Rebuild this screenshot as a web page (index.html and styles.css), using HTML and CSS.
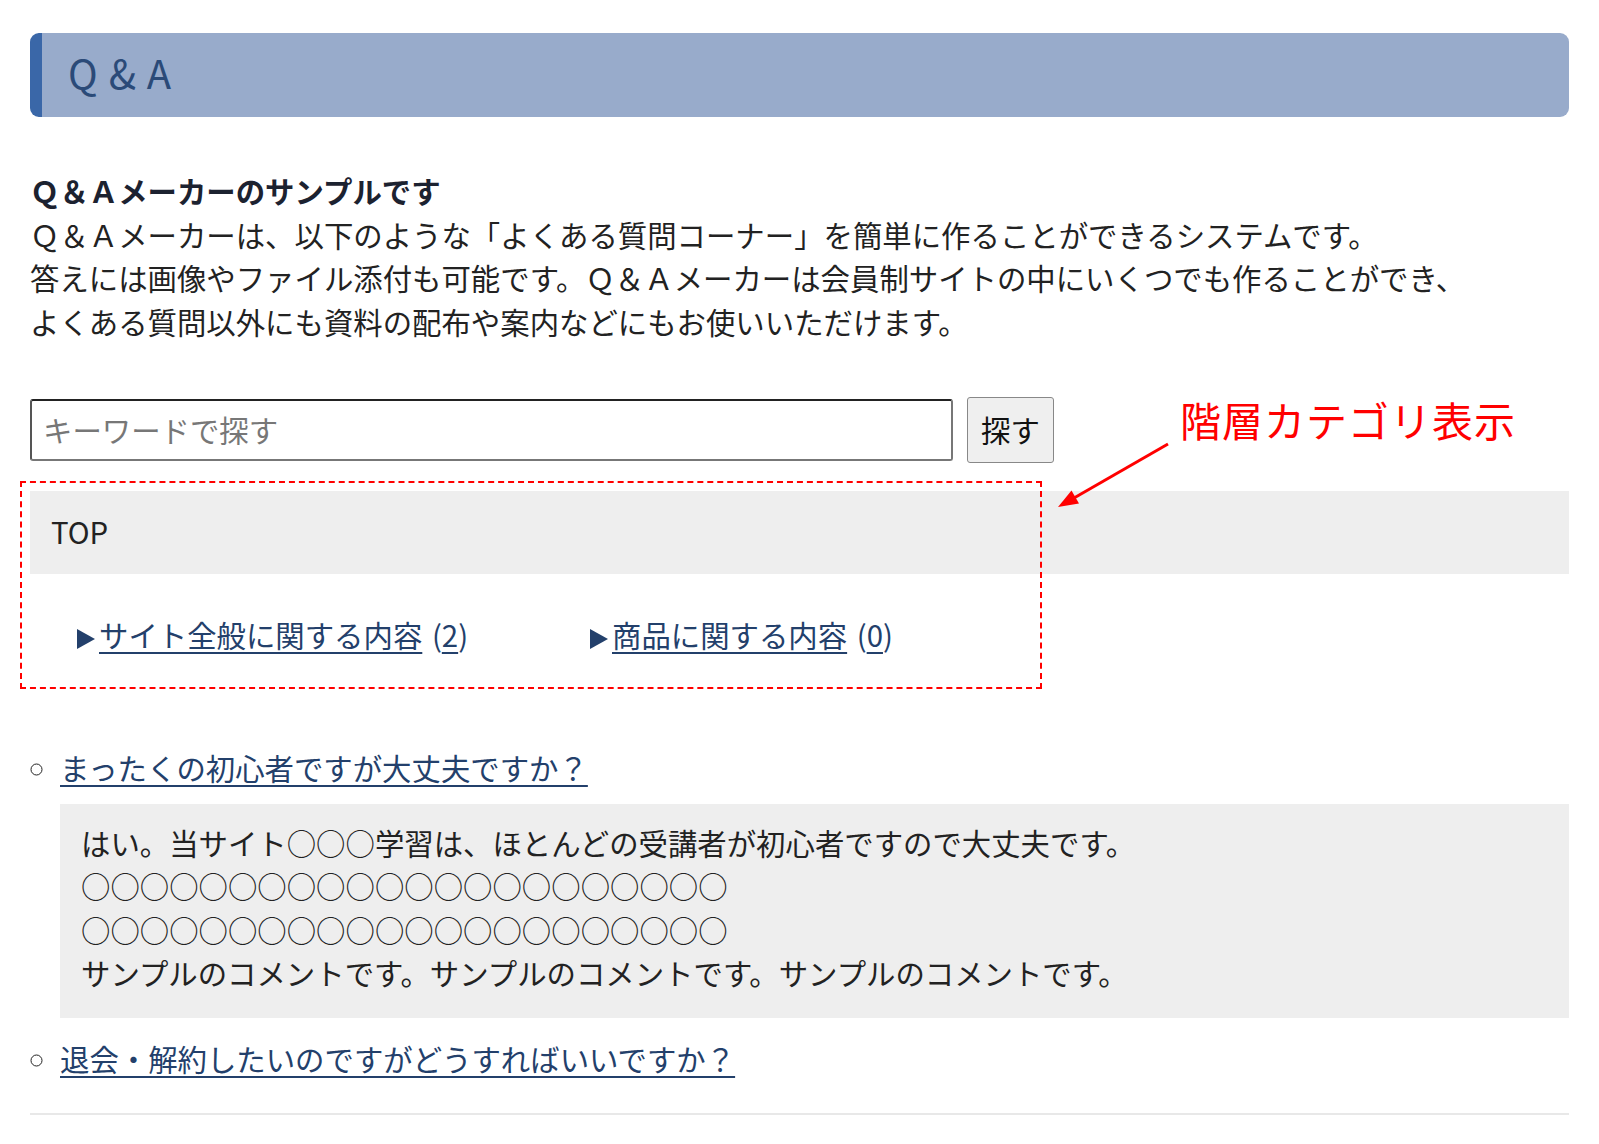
FILE: index.html
```html
<!DOCTYPE html>
<html lang="ja">
<head>
<meta charset="utf-8">
<title>Q &amp; A</title>
<link rel="stylesheet" href="styles.css">
</head>
<body>
<div class="page">
  <h1 class="qa-head">Q &amp; A</h1>

  <div class="intro">
    <p class="intro-title">Ｑ＆Ａメーカーのサンプルです</p>
    <p class="intro-text">Ｑ＆Ａメーカーは、以下のような「よくある質問コーナー」を簡単に作ることができるシステムです。<br>答えには画像やファイル添付も可能です。Ｑ＆Ａメーカーは会員制サイトの中にいくつでも作ることができ、<br>よくある質問以外にも資料の配布や案内などにもお使いいただけます。</p>
  </div>

  <form class="search" onsubmit="return false;">
    <input class="search-input" type="text" placeholder="キーワードで探す">
    <button class="search-btn" type="button">探す</button>
  </form>

  <div class="crumb">TOP</div>

  <ul class="cats">
    <li class="cat"><span class="tri"></span><a href="#">サイト全般に関する内容</a> (<a href="#">2</a>)</li>
    <li class="cat"><span class="tri"></span><a href="#">商品に関する内容</a> (<a href="#">0</a>)</li>
  </ul>

  <ul class="faq">
    <li class="faq-item">
      <a href="#">まったくの初心者ですが大丈夫ですか？</a>
      <div class="answer">はい。当サイト○○○学習は、ほとんどの受講者が初心者ですので大丈夫です。<br>○○○○○○○○○○○○○○○○○○○○○○<br>○○○○○○○○○○○○○○○○○○○○○○<br>サンプルのコメントです。サンプルのコメントです。サンプルのコメントです。</div>
    </li>
    <li class="faq-item">
      <a href="#">退会・解約したいのですがどうすればいいですか？</a>
    </li>
  </ul>

  <hr class="rule">

  <div class="annot-box"></div>
  <div class="annot-label">階層カテゴリ表示</div>
  <svg class="annot-arrow" width="125" height="75" viewBox="0 0 125 75">
    <line x1="118" y1="6" x2="24" y2="60" stroke="#ff0000" stroke-width="3"/>
    <polygon points="8,69 29,65.5 21.5,52.5" fill="#ff0000"/>
  </svg>
</div>
</body>
</html>
```

FILE: styles.css
```css
html, body {
  margin: 0;
  padding: 0;
  background: #ffffff;
}

body {
  font-family: "Noto Sans CJK JP", "Noto Sans", sans-serif;
  font-size: 29.4px;
  line-height: 43.5px;
  color: #222222;
}

.page {
  position: relative;
  padding: 33px 30px 28px;
}

.qa-head {
  margin: 0;
  height: 84px;
  display: flex;
  align-items: center;
  box-sizing: border-box;
  padding: 0 0 7px 26px;
  background: #98abcb;
  border-left: 12px solid #3a67a8;
  border-radius: 9px;
  font-size: 40px;
  line-height: 1.2;
  font-weight: normal;
  letter-spacing: 1px;
  color: #2b4a78;
}

.intro {
  margin-top: 52px;
}

.intro p {
  margin: 0;
}

.intro-title {
  font-weight: bold;
  color: #1c2230;
}

.search {
  display: flex;
  align-items: center;
  gap: 14px;
  margin-top: 54px;
}

.search-input {
  width: 923px;
  height: 62px;
  box-sizing: border-box;
  padding: 0 11px 3px;
  font-family: inherit;
  font-size: 29.4px;
  color: #222222;
  background: #ffffff;
  border-top: 2px solid #222222;
  border-left: 2px solid #555555;
  border-right: 2px solid #777777;
  border-bottom: 2px solid #777777;
  border-radius: 3px;
  outline: none;
}

.search-input::placeholder {
  color: #777777;
}

.search-btn {
  width: 87px;
  height: 66px;
  padding: 0 0 3px;
  font-family: inherit;
  font-size: 29.4px;
  color: #111111;
  background: #efefef;
  border: 1px solid #888888;
  border-radius: 3px;
}

.crumb {
  margin-top: 28px;
  padding: 19px 21px 20px;
  background: #eeeeee;
}

.cats {
  list-style: none;
  margin: 0;
  padding: 39px 0 40px;
  display: grid;
  grid-template-columns: repeat(3, 1fr);
}

.cat {
  padding-left: 47px;
  color: #23406b;
  white-space: nowrap;
  word-spacing: 3px;
}

.cat a,
.faq-item a {
  color: #23406b;
  text-decoration: underline;
  text-underline-offset: 5px;
  text-decoration-thickness: 2px;
}

.tri {
  display: inline-block;
  width: 0;
  height: 0;
  border-left: 18px solid #23406b;
  border-top: 10px solid transparent;
  border-bottom: 10px solid transparent;
  margin-right: 4px;
  vertical-align: -2px;
}

.faq {
  margin: 50px 0 0;
  padding: 0 0 0 30px;
  list-style: circle;
}

.faq-item + .faq-item {
  margin-top: 19px;
}

.faq-item::marker {
  color: #222222;
}

.answer {
  margin-top: 14px;
  padding: 17px 21px 23px;
  background: #eeeeee;
  color: #222222;
}

.rule {
  margin: 33px 0 0;
  border: 0;
  border-top: 2px solid #e8e8e8;
  height: 0;
}

.annot-box {
  position: absolute;
  left: 20px;
  top: 481px;
  width: 1022px;
  height: 208px;
  box-sizing: border-box;
  border: 2px dashed #ff0000;
}

.annot-label {
  position: absolute;
  left: 1180px;
  top: 399px;
  font-size: 41px;
  line-height: 1;
  letter-spacing: 1px;
  color: #ff0000;
  white-space: nowrap;
}

.annot-arrow {
  position: absolute;
  left: 1050px;
  top: 438px;
}
```
